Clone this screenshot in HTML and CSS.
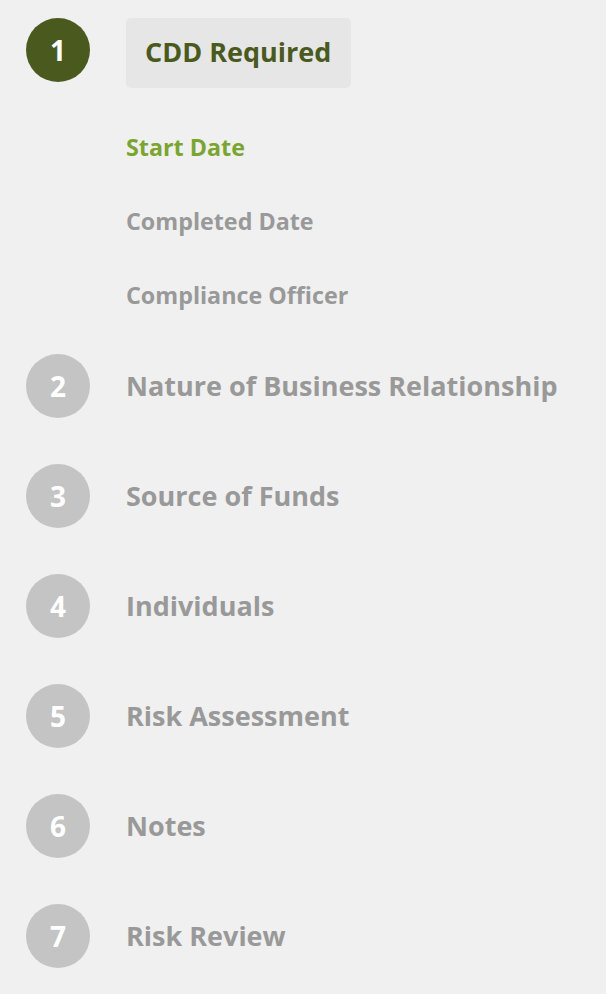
FILE: index.html
```html
<!DOCTYPE html>
<html lang="en">
<head>
<meta charset="utf-8">
<title>CDD Steps</title>
<link rel="stylesheet" href="styles.css">
</head>
<body>
<nav class="steps">
  <div class="step step-active">
    <div class="step-head">
      <span class="step-num">1</span>
      <span class="step-title">CDD Required</span>
    </div>
    <ul class="substeps">
      <li class="substep substep-current">Start Date</li>
      <li class="substep">Completed Date</li>
      <li class="substep">Compliance Officer</li>
    </ul>
  </div>
  <div class="step"><div class="step-head"><span class="step-num">2</span><span class="step-title">Nature of Business Relationship</span></div></div>
  <div class="step"><div class="step-head"><span class="step-num">3</span><span class="step-title">Source of Funds</span></div></div>
  <div class="step"><div class="step-head"><span class="step-num">4</span><span class="step-title">Individuals</span></div></div>
  <div class="step"><div class="step-head"><span class="step-num">5</span><span class="step-title">Risk Assessment</span></div></div>
  <div class="step"><div class="step-head"><span class="step-num">6</span><span class="step-title">Notes</span></div></div>
  <div class="step"><div class="step-head"><span class="step-num">7</span><span class="step-title">Risk Review</span></div></div>
</nav>
</body>
</html>
```

FILE: styles.css
```css
html, body {
  margin: 0;
  padding: 0;
  background: #f0f0f0;
}
body {
  font-family: "Open Sans", "Noto Sans", sans-serif;
  font-weight: 700;
}
.steps {
  display: flex;
  flex-direction: column;
  gap: 46px;
  padding: 18px 0 0 26px;
}
.step-head {
  display: flex;
  align-items: flex-start;
  gap: 36px;
}
.step-num {
  flex: none;
  width: 64px;
  height: 64px;
  border-radius: 50%;
  background: #c4c4c4;
  color: #ffffff;
  font-size: 28px;
  line-height: 64px;
  text-align: center;
}
.step-title {
  color: #999999;
  font-size: 27px;
  line-height: 64px;
  white-space: nowrap;
}
.step-active .step-num {
  background: #4a5a1f;
}
.step-active .step-title {
  color: #4a5a1f;
  background: #e6e6e6;
  border-radius: 5px;
  padding: 0 20px 0 19px;
  line-height: 68px;
  height: 70px;
}
.substeps {
  list-style: none;
  margin: 22px 0 -24px 100px;
  padding: 0;
}
.substep {
  color: #999999;
  font-size: 23.3px;
  line-height: 74px;
  height: 74px;
}
.substep-current {
  color: #7aa530;
}
```
